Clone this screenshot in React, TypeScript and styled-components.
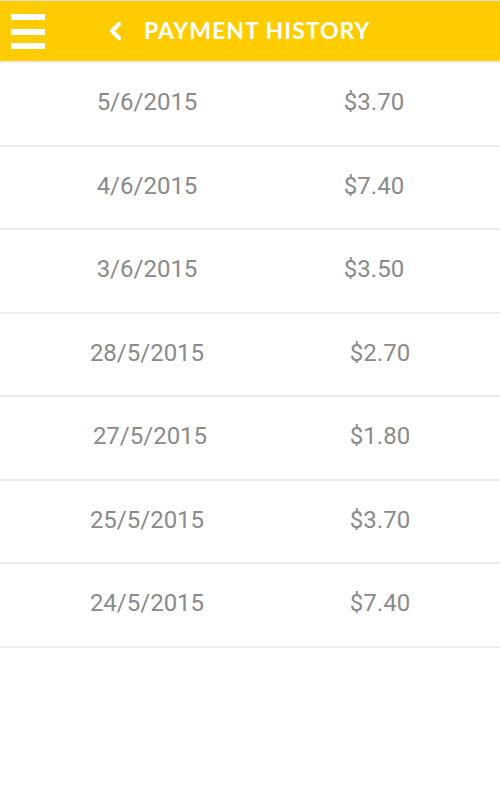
import React from "react";
import styled, { createGlobalStyle } from "styled-components";

const Global = createGlobalStyle`
  html, body { margin: 0; padding: 0; background: #ffffff; }
  body { font-family: Roboto, "Liberation Sans", sans-serif; }
`;

const Page = styled.div`
  width: 500px;
  min-height: 788px;
  background: #ffffff;
  border-top: 1px solid #dcdcdc;
  box-sizing: border-box;
`;

const Header = styled.header`
  height: 60px;
  background: #ffcc00;
  border-bottom: 2px solid #ebebeb;
  display: flex;
  align-items: center;
  padding-left: 11px;
`;

const MenuButton = styled.div`
  width: 34px;
  height: 35px;
  display: flex;
  flex-direction: column;
  justify-content: space-between;
  margin-top: 1px;
`;

const Bar = styled.span`
  display: block;
  height: 6px;
  background: #ffffff;
`;

const Back = styled.svg`
  margin-left: 63px;
  margin-top: -1px;
  width: 14px;
  height: 18px;
`;

const Title = styled.h1`
  margin: -3px 0 0 22px;
  font-family: Lato, "Liberation Sans", sans-serif;
  font-weight: 700;
  font-size: 23px;
  letter-spacing: 1px;
  color: #ffffff;
`;

const List = styled.div`
  display: flex;
  flex-direction: column;
`;

const Row = styled.div`
  height: 81.5px;
  border-bottom: 2px solid #ededed;
  display: grid;
  grid-template-columns: 294px 160px;
  align-items: center;
`;

const Cell = styled.div<{ $shift?: number }>`
  text-align: center;
  font-family: Roboto, "Liberation Sans", sans-serif;
  font-size: 24px;
  color: #8a8a8a;
  padding-left: ${(p) => (p.$shift ?? 0) * 2}px;
  margin-top: -3px;
`;

const rows = [
  { date: "5/6/2015", amount: "$3.70", ds: 0, as: 0 },
  { date: "4/6/2015", amount: "$7.40", ds: 0, as: 0 },
  { date: "3/6/2015", amount: "$3.50", ds: 0, as: 0 },
  { date: "28/5/2015", amount: "$2.70", ds: 0, as: 6 },
  { date: "27/5/2015", amount: "$1.80", ds: 3, as: 6 },
  { date: "25/5/2015", amount: "$3.70", ds: 0, as: 6 },
  { date: "24/5/2015", amount: "$7.40", ds: 0, as: 6 },
];

export default function App() {
  return (
    <>
      <Global />
      <Page>
        <Header>
          <MenuButton>
            <Bar />
            <Bar />
            <Bar />
          </MenuButton>
          <Back viewBox="0 0 14 18">
            <path d="M11 2 L4 9 L11 16" fill="none" stroke="#ffffff" strokeWidth="4" strokeLinecap="round" strokeLinejoin="round" />
          </Back>
          <Title>PAYMENT HISTORY</Title>
        </Header>
        <List>
          {rows.map((r) => (
            <Row key={r.date}>
              <Cell $shift={r.ds}>{r.date}</Cell>
              <Cell $shift={r.as}>{r.amount}</Cell>
            </Row>
          ))}
        </List>
      </Page>
    </>
  );
}
